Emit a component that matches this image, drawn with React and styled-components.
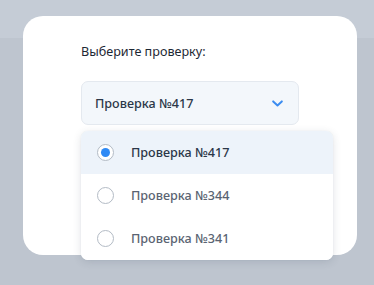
import React, { useState } from "react";
import styled, { createGlobalStyle } from "styled-components";

const GlobalStyle = createGlobalStyle`
  html, body {
    margin: 0;
    padding: 0;
  }
  body {
    width: 374px;
    height: 285px;
    overflow: hidden;
    font-family: "Noto Sans", "Open Sans", sans-serif;
    background: linear-gradient(#c5ccd6 0, #c5ccd6 38px, #bec5cf 38px, #bec5cf 100%);
  }
`;

const Page = styled.div`
  padding: 16px 17px 0 23px;
`;

const Card = styled.div`
  position: relative;
  width: 334px;
  height: 239px;
  box-sizing: border-box;
  background: #ffffff;
  border-radius: 20px;
  padding: 27px 0 0 58px;
`;

const Label = styled.div`
  font-size: 12.6px;
  line-height: 18px;
  color: #1d2734;
  margin-bottom: 20px;
`;

const Select = styled.div`
  position: relative;
  width: 218px;
  height: 44px;
  box-sizing: border-box;
  display: flex;
  align-items: center;
  justify-content: space-between;
  padding: 0 15px 0 13px;
  background: #f3f7fb;
  border: 1px solid #e4e9ef;
  border-radius: 7px;
  cursor: pointer;
`;

const Value = styled.span`
  font-size: 12.6px;
  font-weight: 500;
  color: #2b3748;
`;

const Menu = styled.ul`
  position: absolute;
  top: 49px;
  left: -1px;
  width: 252px;
  margin: 0;
  padding: 0;
  list-style: none;
  background: #ffffff;
  border-radius: 7px;
  overflow: hidden;
  box-shadow: 0 2px 8px rgba(40, 55, 80, 0.14), 0 0 1px rgba(40, 55, 80, 0.12);
`;

const Option = styled.li`
  height: 43px;
  display: flex;
  align-items: center;
  padding-left: 16px;
  gap: 17px;
  background: ${(p) => (p.$active ? "#edf3fa" : "#ffffff")};
  font-size: 12.6px;
  font-weight: 500;
  color: ${(p) => (p.$active ? "#2b3748" : "#5a6472")};
  cursor: pointer;
`;

const Radio = styled.span`
  width: 17px;
  height: 17px;
  box-sizing: border-box;
  border-radius: 50%;
  border: 1px solid #b3bbc5;
  background: #ffffff;
  display: flex;
  align-items: center;
  justify-content: center;
  &::after {
    content: "";
    width: 9px;
    height: 9px;
    border-radius: 50%;
    background: ${(p) => (p.$checked ? "#2f8af5" : "transparent")};
  }
`;

const Chevron = () => (
  <svg width="11" height="7" viewBox="0 0 11 7" fill="none">
    <path
      d="M1.2 1.4L5.5 5.4L9.8 1.4"
      stroke="#3b8cf0"
      strokeWidth="2"
      strokeLinecap="round"
      strokeLinejoin="round"
    />
  </svg>
);

const checks = [417, 344, 341];

export default function App() {
  const [selected, setSelected] = useState(417);

  return (
    <>
      <GlobalStyle />
      <Page>
        <Card>
          <Label>Выберите проверку:</Label>
          <Select>
            <Value>Проверка №{selected}</Value>
            <Chevron />
            <Menu>
              {checks.map((n) => (
                <Option
                  key={n}
                  $active={n === selected}
                  onClick={() => setSelected(n)}
                >
                  <Radio $checked={n === selected} />
                  Проверка №{n}
                </Option>
              ))}
            </Menu>
          </Select>
        </Card>
      </Page>
    </>
  );
}
